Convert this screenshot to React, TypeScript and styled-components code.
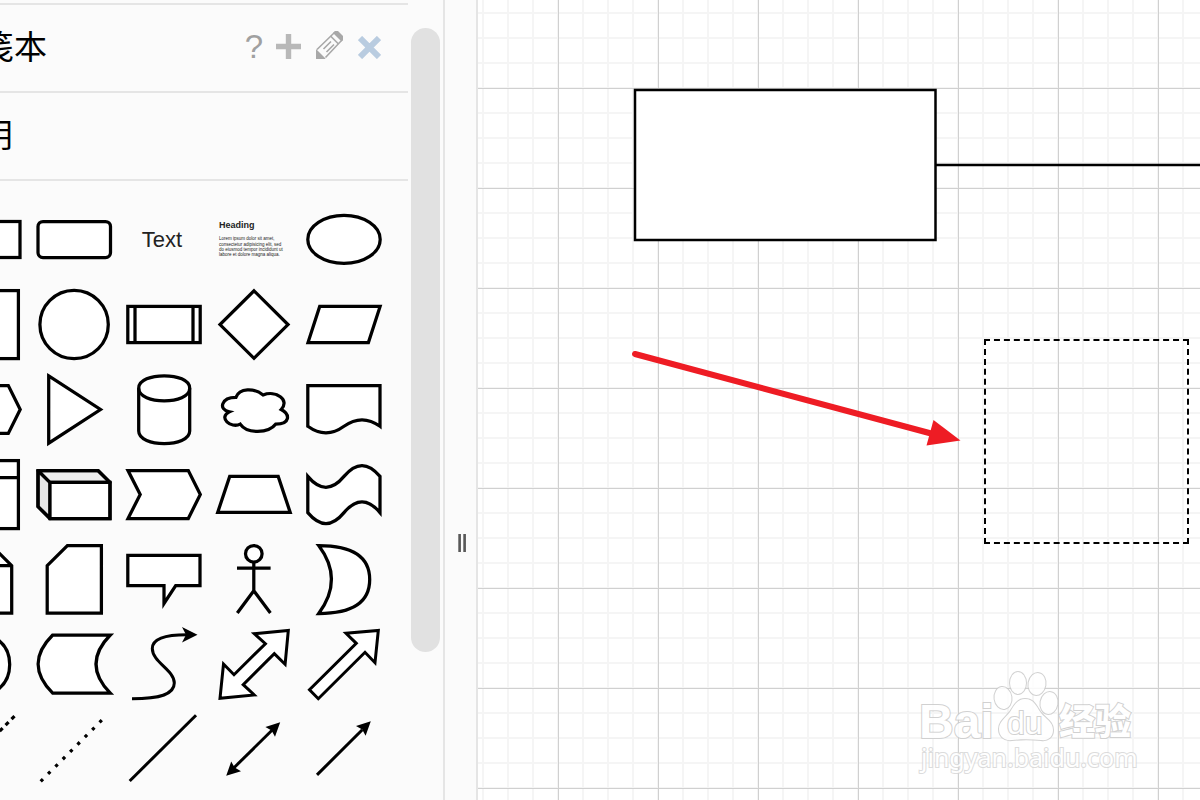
import React from "react";
import styled, { createGlobalStyle } from "styled-components";

const GlobalStyle = createGlobalStyle`
  *, *::before, *::after { box-sizing: border-box; }
  body {
    margin: 0;
    background: #fbfbfb;
    color: #000;
    font-family: "Liberation Sans", "Noto Sans CJK SC", sans-serif;
  }
  button { font: inherit; }
`;

const Editor = styled.div`
  display: flex;
  height: 100vh;
  overflow: hidden;
`;

const Sidebar = styled.aside`
  flex: 0 0 445px;
  display: flex;
  min-width: 0;
  border-right: 2px solid #e5e5e5;
  background: #fbfbfb;
`;

const SidebarViewport = styled.div`
  flex: 1;
  display: flex;
  justify-content: flex-end;
  min-width: 0;
  overflow: hidden;
`;

const Sections = styled.div`
  flex: 0 0 470px;
  padding-top: 3px;
`;

const SectionHeader = styled.header`
  display: flex;
  align-items: center;
  justify-content: space-between;
  height: 88px;
  padding: 0 27px 0 10px;
  border-top: 2px solid #e5e5e5;
`;

const SectionTitle = styled.h2`
  margin: 0;
  font-size: 33px;
  line-height: 40px;
  font-weight: 400;
`;

const Actions = styled.div`
  display: flex;
  align-items: flex-end;
  gap: 15px;
  padding-bottom: 6px;
`;

const IconButton = styled.button<{ $color: string }>`
  display: flex;
  align-items: center;
  justify-content: center;
  padding: 0;
  border: 0;
  background: none;
  color: ${(p) => p.$color};
  font-size: 33px;
  line-height: 24px;
  cursor: pointer;

  svg { display: block; }
`;

const HelpButton = styled(IconButton)`
  width: 14px;
`;

const Palette = styled.div`
  display: grid;
  grid-template-columns: repeat(5, 90px);
  grid-auto-rows: 85px;
  justify-content: start;
  padding-top: 16px;
  padding-left: 1px;
  border-top: 2px solid #e5e5e5;
`;

const ShapeButton = styled.button`
  padding: 0;
  border: 0;
  background: none;
  cursor: grab;

  svg {
    display: block;
    fill: #fff;
    stroke: #000;
    stroke-width: 3.25;
    stroke-miterlimit: 10;
  }
  text { fill: #222; stroke: none; }
  .solid { fill: #000; stroke: none; }
  .open { fill: none; }
  .thin { stroke-width: 3; }
  .round { stroke-linejoin: round; }
`;

const ScrollTrack = styled.div`
  flex: 0 0 35px;
  padding: 28px 3px;
`;

const ScrollThumb = styled.div`
  height: 624px;
  border-radius: 15px;
  background: #e1e1e1;
`;

const Splitter = styled.div`
  flex: 0 0 33px;
  display: flex;
  justify-content: flex-end;
  align-items: flex-start;
  gap: 2px;
  padding: 534px 10px 0 0;
  border-right: 2px solid #e5e5e5;
  background: #fbfbfb;
  cursor: col-resize;
`;

const GripBar = styled.span`
  width: 3px;
  height: 18px;
  background: linear-gradient(90deg, #a0a0a0, #4a4a4a 60%, #777);
`;

const Canvas = styled.main`
  position: relative;
  flex: 1;
  min-width: 0;
  overflow: hidden;
  background-color: #fff;
  background-image:
    linear-gradient(90deg, #d0d0d0 1px, transparent 1px),
    linear-gradient(#d0d0d0 1px, transparent 1px),
    linear-gradient(90deg, #f5f5f5 2px, transparent 2px),
    linear-gradient(#f5f5f5 2px, transparent 2px);
  background-size: 100px 100px, 100px 100px, 25px 25px, 25px 25px;
  background-position: 80px 0, 0 88px, 4px 0, 0 12px;
`;

const Drawing = styled.svg`
  position: absolute;
  inset: 0;
  width: 100%;
  height: 100%;
`;

const DropPreview = styled.div`
  position: absolute;
  left: 506px;
  top: 339px;
  width: 205px;
  height: 205px;
  border: 2px dashed #000;
`;

const Watermark = styled.svg`
  position: absolute;
  right: 60px;
  bottom: 20px;
  fill: #fff;
  stroke: #cacaca;
  stroke-width: 2;
  paint-order: stroke;
  opacity: 0.85;

  .brand { font: 700 48px "Liberation Sans", sans-serif; }
  .inner { font: 400 32px "Liberation Sans", sans-serif; }
  .cjk { font: 900 36px "Noto Sans CJK SC", sans-serif; }
  .url { font: 400 25px "Noto Sans", sans-serif; stroke: #d6d6d6; }
`;

type Shape = { name: string; art: React.ReactNode };

const shapes: Shape[] = [
  { name: "Rectangle", art: <rect x="9" y="24.5" width="72" height="36" /> },
  { name: "Rounded rectangle", art: <rect x="9" y="24.5" width="72.5" height="36" rx="5" /> },
  {
    name: "Text",
    art: <text x="43" y="50" fontSize="22" textAnchor="middle">Text</text>,
  },
  {
    name: "Textbox",
    art: (
      <svg viewBox="0 0 180 170" width="90" height="85">
        <text x="20" y="62" fontSize="18" fontWeight="700">Heading</text>
        <g fontSize="9">
          <text x="20" y="86">Lorem ipsum dolor sit amet,</text>
          <text x="20" y="97">consectetur adipisicing elit, sed</text>
          <text x="20" y="108">do eiusmod tempor incididunt ut</text>
          <text x="20" y="118">labore et dolore magna aliqua.</text>
        </g>
      </svg>
    ),
  },
  { name: "Ellipse", art: <ellipse cx="45" cy="42.4" rx="36.2" ry="24" /> },

  { name: "Square", art: <rect x="11.4" y="8.6" width="68" height="68" /> },
  { name: "Circle", art: <circle cx="45.1" cy="42.5" r="34.2" /> },
  {
    name: "Process",
    art: <><rect x="8.8" y="24.4" width="72.4" height="36.2" /><path d="M16 24V61M74 24V61" /></>,
  },
  { name: "Diamond", art: <path d="M45 8.8L79 42.6L45 76.3L11 42.6Z" /> },
  { name: "Parallelogram", art: <path d="M20.7 24.4H81.1L69.4 60.6H9Z" /> },

  { name: "Hexagon", art: <path d="M20.7 18.6H69.3L81.2 42.5L69.3 66.4H20.7L8.8 42.5Z" /> },
  { name: "Triangle", art: <path d="M19.7 8.9L71.5 42.5L19.7 76.2Z" /> },
  {
    name: "Cylinder",
    art: (
      <>
        <path d="M19.7 21.2C19.7 4.6 70.7 4.6 70.7 21.2V64C70.7 80.8 19.7 80.8 19.7 64Z" />
        <path className="open" d="M19.7 21.2C19.7 38 70.7 38 70.7 21.2" />
      </>
    ),
  },
  {
    name: "Cloud",
    art: (
      <path d="M26.9 30.4C12.4 30.4 8.8 42.5 20.4 44.9C8.8 50.3 21.8 61.9 31.2 57.1C37.8 66.8 59.5 66.8 66.8 57.1C81.3 57.1 81.3 47.4 72.2 42.5C81.3 32.8 66.8 23.1 54.1 28C45 20.7 30.5 20.7 26.9 30.4Z" />
    ),
  },
  { name: "Document", art: <path d="M8.8 18.5H81V59.3Q63 46.3 45 59.3Q27 72.4 8.8 59.3Z" /> },

  {
    name: "Internal storage",
    art: <><rect x="11.4" y="8.6" width="68" height="68" /><path d="M11 25.6H79" /></>,
  },
  {
    name: "Cube",
    art: (
      <>
        <path className="round" d="M9 18.5L21 30.4V66.5L9 54.6Z" fill="#e6e6e6" />
        <path className="round" d="M9 18.5H69L81 30.4H21Z" fill="#efefef" />
        <path d="M21 30.4H81V66.5H21Z" />
        <path className="open" d="M9 18.5H69L81 30.4V66.5H21L9 54.6Z" />
      </>
    ),
  },
  { name: "Step", art: <path d="M9 18.5H69.3L81.3 42.5L69.3 66.5H9L21.2 42.5Z" /> },
  { name: "Trapezoid", art: <path d="M20.7 24.4H69.2L81.2 60.4H8.7Z" /> },
  {
    name: "Tape",
    art: <path d="M8.8 24.4Q27 46.1 45 24.4Q63 2.6 81 24.4V60.6Q63 38.9 45 60.6Q27 82.4 8.8 60.6Z" />,
  },

  {
    name: "Note",
    art: <><path d="M17.3 8.5H52.5L72.7 28.7V76.2H17.3Z" /><path className="open" d="M52.5 8.5V28.7H72.7" /></>,
  },
  { name: "Card", art: <path d="M38.4 8.6H72.4V76.2H18.2V28.6Z" /> },
  { name: "Callout", art: <path d="M8.8 18.4H81V48.5H56.7L45 66.5V48.5H8.8Z" /> },
  {
    name: "Actor",
    art: <><circle cx="44.8" cy="16.8" r="8.3" /><path className="open" d="M44.8 25V53.7M28 31H61.6M28.3 76L44.8 53.7L61.4 76" /></>,
  },
  { name: "Or", art: <path d="M19.7 8.6Q70.7 8.6 70.7 42.5Q70.7 76.5 19.7 76.5Q45.2 42.5 19.7 8.6Z" /> },

  { name: "And", art: <path d="M19.7 8.6Q70.7 8.6 70.7 42.5Q70.7 76.5 19.7 76.5Z" /> },
  { name: "Data storage", art: <path d="M23.7 13H81.3Q52.7 42 81.3 71.2H23.7Q-5.5 42 23.7 13Z" /> },
  {
    name: "Curve",
    art: (
      <>
        <path className="open thin" d="M13 76.7C42 76.7 55.3 72 55.3 61C55.3 48 33.3 40 33.3 26.5C33.3 17 45 12.7 68 12.7" />
        <path className="solid" d="M78.5 12.7L63 20.4L67 12.7L63 5Z" />
      </>
    ),
  },
  {
    name: "Bidirectional arrow",
    art: <path className="thin" d="M79.3 8.5L76.1 42.3L65.3 31.7L34.2 62.6L45.3 73L11 76.3L14.5 42L25 52.7L56.4 21.7L45.3 11.7Z" />,
  },
  { name: "Arrow", art: <path className="thin" d="M79.3 8.5L76 40.7L66 30.3L19.3 76.7L10.5 67.7L57.3 21.3L47 11.3Z" /> },

  { name: "Dashed line", art: <path d="M75.5 9.2L16 68.7" strokeDasharray="4.2 4.2" /> },
  { name: "Dotted line", art: <path d="M72.8 13.2L11.5 74.5" strokeDasharray="3.2 7.2" /> },
  { name: "Line", art: <path className="thin" d="M77 8.2L10.7 74" /> },
  {
    name: "Bidirectional connector",
    art: (
      <>
        <path className="thin" d="M63 23.3L25 60.7" />
        <path className="solid" d="M71.2 15.2L66 29.8L62.6 23.6L56.4 20Z" />
        <path className="solid" d="M17.2 68.8L22.2 54.6L25.7 60.5L32 64.2Z" />
      </>
    ),
  },
  {
    name: "Directional connector",
    art: (
      <>
        <path className="thin" d="M18 67.9L63.3 22.7" />
        <path className="solid" d="M71.8 14.2L66.6 28.8L63.2 22.6L57 19Z" />
      </>
    ),
  },
];

function PlusIcon() {
  return (
    <svg width="25" height="25" viewBox="0 0 25 25" aria-hidden="true">
      <path d="M0 12.5H25M12.5 0V25" stroke="currentColor" strokeWidth="5.4" />
    </svg>
  );
}

function PencilIcon() {
  return (
    <svg width="27" height="28" viewBox="0 0 27 28" fill="none" aria-hidden="true">
      <path d="M1 18.5L18.5 1.5L26 9L9.5 26.5" stroke="currentColor" strokeWidth="1.6" />
      <path d="M0 18L9.5 27.5L9 28H0Z" fill="currentColor" />
      <path d="M17 2L19 0H22L27 5V9L25.5 10.5Z" fill="currentColor" />
      <path d="M14.5 5L22.5 13" stroke="currentColor" strokeWidth="1.6" />
      <path d="M7.5 18L15 10.5M10.5 21L18 13.5" stroke="currentColor" strokeWidth="1.6" />
    </svg>
  );
}

function CloseIcon() {
  return (
    <svg width="23" height="23" viewBox="0 0 23 23" aria-hidden="true">
      <path d="M2 2L21 21M21 2L2 21" stroke="currentColor" strokeWidth="6" />
    </svg>
  );
}

export default function App() {
  return (
    <Editor>
      <GlobalStyle />
      <Sidebar>
        <SidebarViewport>
          <Sections>
            <SectionHeader>
              <SectionTitle>便笺本</SectionTitle>
              <Actions>
                <HelpButton $color="#a0a0a0" aria-label="Help">?</HelpButton>
                <IconButton $color="#b8b8b8" aria-label="Add"><PlusIcon /></IconButton>
                <IconButton $color="#a8a8a8" aria-label="Edit"><PencilIcon /></IconButton>
                <IconButton $color="#b9cce0" aria-label="Close"><CloseIcon /></IconButton>
              </Actions>
            </SectionHeader>
            <SectionHeader>
              <SectionTitle>通用</SectionTitle>
            </SectionHeader>
            <Palette>
              {shapes.map((shape) => (
                <ShapeButton key={shape.name} aria-label={shape.name}>
                  <svg width="90" height="85" viewBox="0 0 90 85">{shape.art}</svg>
                </ShapeButton>
              ))}
            </Palette>
          </Sections>
        </SidebarViewport>
        <ScrollTrack>
          <ScrollThumb />
        </ScrollTrack>
      </Sidebar>
      <Splitter>
        <GripBar />
        <GripBar />
      </Splitter>
      <Canvas>
        <Drawing>
          <rect x="157" y="90" width="300.5" height="150" fill="#fff" stroke="#000" strokeWidth="2.5" />
          <line x1="458" y1="165" x2="100%" y2="165" stroke="#000" strokeWidth="2.5" />
          <path d="M157 354L455 434" stroke="#ee1c24" strokeWidth="6" strokeLinecap="round" />
          <path d="M482.5 440.5L455.5 420L448.5 445.5Z" fill="#ee1c24" />
        </Drawing>
        <DropPreview />
        <Watermark width="222" height="116" viewBox="0 0 222 116">
          <text className="brand" x="1" y="74">Bai</text>
          <ellipse cx="85" cy="34" rx="8.5" ry="11" transform="rotate(-8 85 34)" />
          <ellipse cx="100" cy="19" rx="8" ry="11" />
          <ellipse cx="119" cy="20" rx="8.5" ry="11" transform="rotate(10 119 20)" />
          <ellipse cx="131" cy="39" rx="8.5" ry="11" transform="rotate(10 131 39)" />
          <path d="M107 35C116 35 118 42 123 49C128 55 135 58 135 66C135 73 130 77 123 76C113 75 103 75 94 76C86 77 81 72 81 65C81 58 87 54 92 48C96 42 99 35 107 35Z" />
          <text className="inner" x="89" y="70">du</text>
          <text className="cjk" x="141" y="71">经验</text>
          <text className="url" x="3" y="103">jingyan.baidu.com</text>
        </Watermark>
      </Canvas>
    </Editor>
  );
}
